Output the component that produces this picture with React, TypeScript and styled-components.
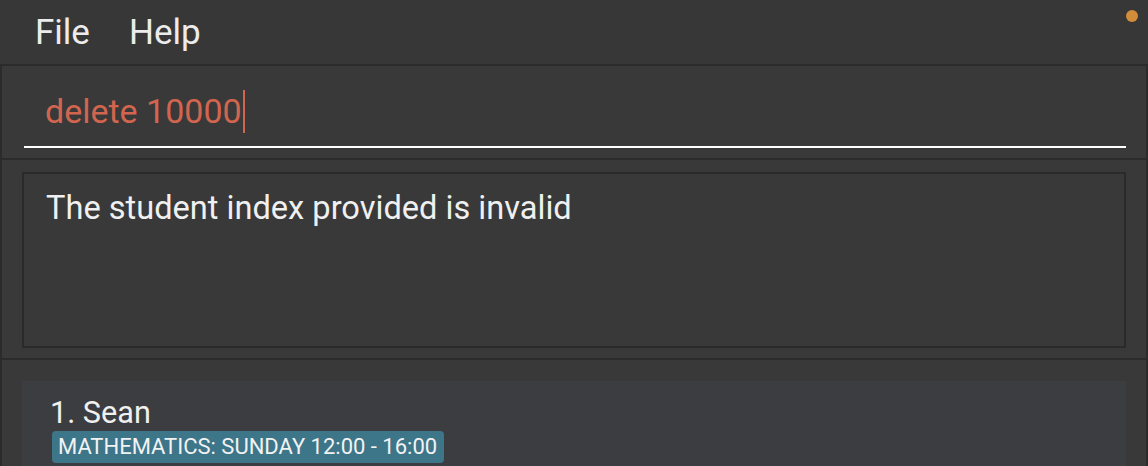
import React from "react";
import styled, { createGlobalStyle } from "styled-components";

const Global = createGlobalStyle`
  html, body { margin: 0; padding: 0; background: #383838; }
  body { font-family: "Roboto", "Noto Sans", sans-serif; overflow: hidden; }
`;

const Window = styled.div`
  width: 1148px;
  height: 466px;
  display: flex;
  flex-direction: column;
  background: #383838;
  overflow: hidden;
`;

const MenuBar = styled.div`
  flex: 0 0 64px;
  display: flex;
  align-items: center;
  gap: 39px;
  padding: 0 16px 0 35px;
  background: #373737;
  position: relative;
`;

const MenuItem = styled.span`
  color: #ececec;
  font-size: 35px;
  line-height: 35px;
`;

const StatusDot = styled.span`
  position: absolute;
  top: 10px;
  right: 10px;
  width: 12px;
  height: 12px;
  border-radius: 50%;
  background: #d38c3a;
`;

const Body = styled.div`
  flex: 1;
  min-height: 0;
  display: flex;
  flex-direction: column;
  border-left: 2px solid #2b2b2b;
  border-right: 2px solid #2b2b2b;
`;

const Section = styled.div<{ $h?: number }>`
  border-top: 2px solid #2b2b2b;
  background: #393939;
  ${(p) => (p.$h ? `flex: 0 0 ${p.$h}px;` : "flex: 1; min-height: 0;")}
  display: flex;
  flex-direction: column;
  overflow: hidden;
`;

const CommandField = styled.div`
  margin: 22px 20px 0 22px;
  height: 56px;
  padding-top: 2px;
  border-bottom: 2px solid #ffffff;
  display: flex;
  align-items: flex-start;
  padding-left: 21px;
`;

const CommandText = styled.span`
  color: #d2654f;
  font-size: 34px;
  line-height: 43px;
  display: flex;
  align-items: flex-start;
`;

const Caret = styled.span`
  display: inline-block;
  width: 2px;
  height: 43px;
  background: #d2654f;
  margin-left: 1px;
`;

const ResultBox = styled.div`
  margin: 12px 20px 10px 20px;
  flex: 1;
  border: 2px solid #2a2a2a;
  padding: 15px 22px;
`;

const ResultText = styled.div`
  color: #f0f0f0;
  font-size: 32.6px;
  line-height: normal;
`;

const List = styled.div`
  padding: 21px 20px 0 20px;
`;

const Card = styled.div`
  background: #3c3d40;
  padding: 15px 30px 10px 30px;
  display: flex;
  flex-direction: column;
  align-items: flex-start;
  gap: 1px;
  height: 200px;
`;

const Name = styled.div`
  color: #f0f0f0;
  font-size: 30.6px;
  line-height: 34px;
  margin-left: -2px;
`;

const Tag = styled.span`
  background: #3d7589;
  color: #f2f2f2;
  font-size: 22px;
  line-height: 32px;
  padding: 0 7px 0 6px;
  border-radius: 4px;
`;

export default function App() {
  return (
    <>
      <Global />
      <Window>
        <MenuBar>
          <MenuItem>File</MenuItem>
          <MenuItem>Help</MenuItem>
          <StatusDot />
        </MenuBar>
        <Body>
          <Section $h={92}>
            <CommandField>
              <CommandText>
                delete 10000
                <Caret />
              </CommandText>
            </CommandField>
          </Section>
          <Section $h={198}>
            <ResultBox>
              <ResultText>The student index provided is invalid</ResultText>
            </ResultBox>
          </Section>
          <Section>
            <List>
              <Card>
                <Name>1. Sean</Name>
                <Tag>MATHEMATICS: SUNDAY 12:00 - 16:00</Tag>
              </Card>
            </List>
          </Section>
        </Body>
      </Window>
    </>
  );
}
